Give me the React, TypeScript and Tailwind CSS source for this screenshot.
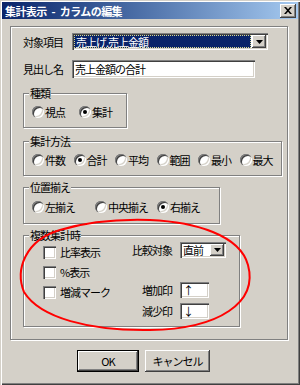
import React from 'react';

// classic 3D edges
const SUNKEN = 'shadow-[inset_1px_1px_0_#808080,inset_2px_2px_0_#404040,inset_-1px_-1px_0_#ffffff,inset_-2px_-2px_0_#d4d0c8]';
const RAISED = 'shadow-[inset_-1px_-1px_0_#404040,inset_1px_1px_0_#ffffff,inset_-2px_-2px_0_#808080,inset_2px_2px_0_#d4d0c8]';
const ETCHED = 'border border-[#808080] shadow-[inset_1px_1px_0_#ffffff,1px_1px_0_#ffffff]';

function Arrow() {
  return (
    <svg width="7" height="4" viewBox="0 0 7 4">
      <path d="M0 0h7L3.5 4z" fill="#000" />
    </svg>
  );
}

function Radio({ label, checked, className }: { label: string; checked?: boolean; className: string }) {
  return (
    <label className={`flex items-center h-[14px] gap-[1px] ${className}`}>
      <span className={`flex items-center justify-center w-[12px] h-[12px] rounded-full bg-white ${SUNKEN}`}>
        {checked && <span className="w-[4px] h-[4px] rounded-full bg-black" />}
      </span>
      <span className="leading-[14px]">{label}</span>
    </label>
  );
}

function Check({ label }: { label: string }) {
  return (
    <label className="flex items-center h-[14px] gap-[4px]">
      <span className={`w-[13px] h-[13px] bg-white ${SUNKEN}`} />
      <span className="leading-[14px]">{label}</span>
    </label>
  );
}

function Group({ title, className, children }: { title: string; className: string; children: React.ReactNode }) {
  return (
    <div className={`relative ${ETCHED} ${className}`}>
      <span className="absolute -top-[7px] left-[5px] px-[1px] bg-[#d4d0c8] leading-[12px]">{title}</span>
      {children}
    </div>
  );
}

export default function App() {
  return (
    <div className="relative w-[300px] h-[385px] overflow-hidden bg-[#d4d0c8] text-[11px] tracking-[-1px] text-black font-['Noto_Sans_CJK_JP',sans-serif] shadow-[inset_1px_1px_0_#d4d0c8,inset_2px_2px_0_#ffffff,inset_-1px_-1px_0_#404040,inset_-2px_-2px_0_#808080]">
      {/* title bar */}
      <div className="pt-[2px] mx-[2px]">
        <div className="flex items-center justify-between h-[17px] pl-[3px] pr-[2px] bg-gradient-to-r from-[#0a246a] to-[#a6caf0]">
          <span className="text-white font-bold leading-[14px] tracking-[-0.6px] [word-spacing:3px]">集計表示 - カラムの編集</span>
          <span className={`flex items-center justify-center w-[16px] h-[14px] bg-[#d4d0c8] ${RAISED}`}>
            <svg width="8" height="7" viewBox="0 0 8 7">
              <path d="M0 0h2l2 2.3L6 0h2L5 3.5 8 7H6L4 4.7 2 7H0l3-3.5z" fill="#000" />
            </svg>
          </span>
        </div>
      </div>

      {/* main panel */}
      <div className={`ml-[10px] mt-[7px] w-[278px] h-[314px] pl-[12px] pt-[6px] ${ETCHED}`}>
        <div className="flex items-center h-[17px]">
          <span className="w-[49px] leading-[14px]">対象項目</span>
          <div className={`flex w-[196px] h-[17px] p-[2px] gap-[1px] bg-white ${SUNKEN}`}>
            <div className="flex-1 flex items-center pl-[1px] bg-[#0a246a] text-white border border-dotted border-[#d8d890] leading-[12px]">
              売上げ.売上金額
            </div>
            <div className={`flex items-center justify-center w-[14px] bg-[#d4d0c8] ${RAISED}`}>
              <Arrow />
            </div>
          </div>
        </div>

        <div className="flex items-center h-[18px] mt-[10px]">
          <span className="w-[49px] leading-[14px]">見出し名</span>
          <div className={`flex items-center w-[183px] h-[18px] pl-[3px] bg-white ${SUNKEN}`}>
            <span className="leading-[14px]">売上金額の合計</span>
          </div>
        </div>

        <Group title="種類" className="mt-[15px] w-[104px] h-[35px]">
          <div className="flex pt-[11px] pl-[8px]">
            <Radio label="視点" className="w-[47px]" />
            <Radio label="集計" checked className="w-[40px]" />
          </div>
        </Group>

        <Group title="集計方法" className="mt-[13px] w-[259px] h-[35px]">
          <div className="flex pt-[11px] pl-[8px]">
            <Radio label="件数" className="w-[41.5px]" />
            <Radio label="合計" checked className="w-[41.5px]" />
            <Radio label="平均" className="w-[41.5px]" />
            <Radio label="範囲" className="w-[41.5px]" />
            <Radio label="最小" className="w-[41.5px]" />
            <Radio label="最大" className="w-[40px]" />
          </div>
        </Group>

        <Group title="位置揃え" className="mt-[11px] w-[197px] h-[37px]">
          <div className="flex pt-[12px] pl-[8px]">
            <Radio label="左揃え" className="w-[63px]" />
            <Radio label="中央揃え" className="w-[62px]" />
            <Radio label="右揃え" checked className="w-[50px]" />
          </div>
        </Group>

        <Group title="複数集計時" className="mt-[11px] w-[217px] h-[92px]">
          <div className="flex pl-[19px]">
            <div className="flex flex-col gap-[6px] pt-[9px] w-[89px]">
              <Check label="比率表示" />
              <Check label="%表示" />
              <Check label="増減マーク" />
            </div>
            <div className="flex flex-col pt-[6px]">
              <div className="flex items-center h-[16px]">
                <span className="w-[40px] text-right leading-[14px]">比較対象</span>
                <div className={`flex ml-[8px] w-[46px] h-[16px] p-[2px] bg-white ${SUNKEN}`}>
                  <div className="flex-1 flex items-center pl-[1px] leading-[12px]">直前</div>
                  <div className={`flex items-center justify-center w-[14px] bg-[#d4d0c8] ${RAISED}`}>
                    <Arrow />
                  </div>
                </div>
              </div>
              <div className="flex items-center h-[16px] mt-[24px]">
                <span className="w-[40px] text-right leading-[14px]">増加印</span>
                <div className={`flex items-center ml-[8px] w-[29px] h-[16px] pl-[3px] bg-white ${SUNKEN}`}>
                  <span className="leading-[14px]">↑</span>
                </div>
              </div>
              <div className="flex items-center h-[16px] mt-[5px]">
                <span className="w-[40px] text-right leading-[14px]">減少印</span>
                <div className={`flex items-center ml-[8px] w-[29px] h-[16px] pl-[3px] bg-white ${SUNKEN}`}>
                  <span className="leading-[14px]">↓</span>
                </div>
              </div>
            </div>
          </div>
        </Group>
      </div>

      {/* buttons */}
      <div className="flex mt-[10px] ml-[77px] gap-[6px]">
        <button className="w-[62px] h-[22px] border border-black bg-[#d4d0c8]">
          <span className={`flex items-center justify-center w-full h-full ${RAISED}`}>OK</span>
        </button>
        <button className={`flex items-center justify-center w-[65px] h-[22px] bg-[#d4d0c8] ${RAISED}`}>
          キャンセル
        </button>
      </div>

      {/* red marker ellipse drawn over the dialog */}
      <svg className="absolute left-0 top-0 pointer-events-none" width="300" height="385" viewBox="0 0 300 385">
        <path
          d="M150 220C195 222 240 235 248 265C258 302 220 329 150 330C90 331 40 318 24 292C15 270 25 240 60 230C90 221 120 219 150 220Z"
          fill="none"
          stroke="#ff0000"
          strokeWidth="2"
        />
      </svg>
    </div>
  );
}
